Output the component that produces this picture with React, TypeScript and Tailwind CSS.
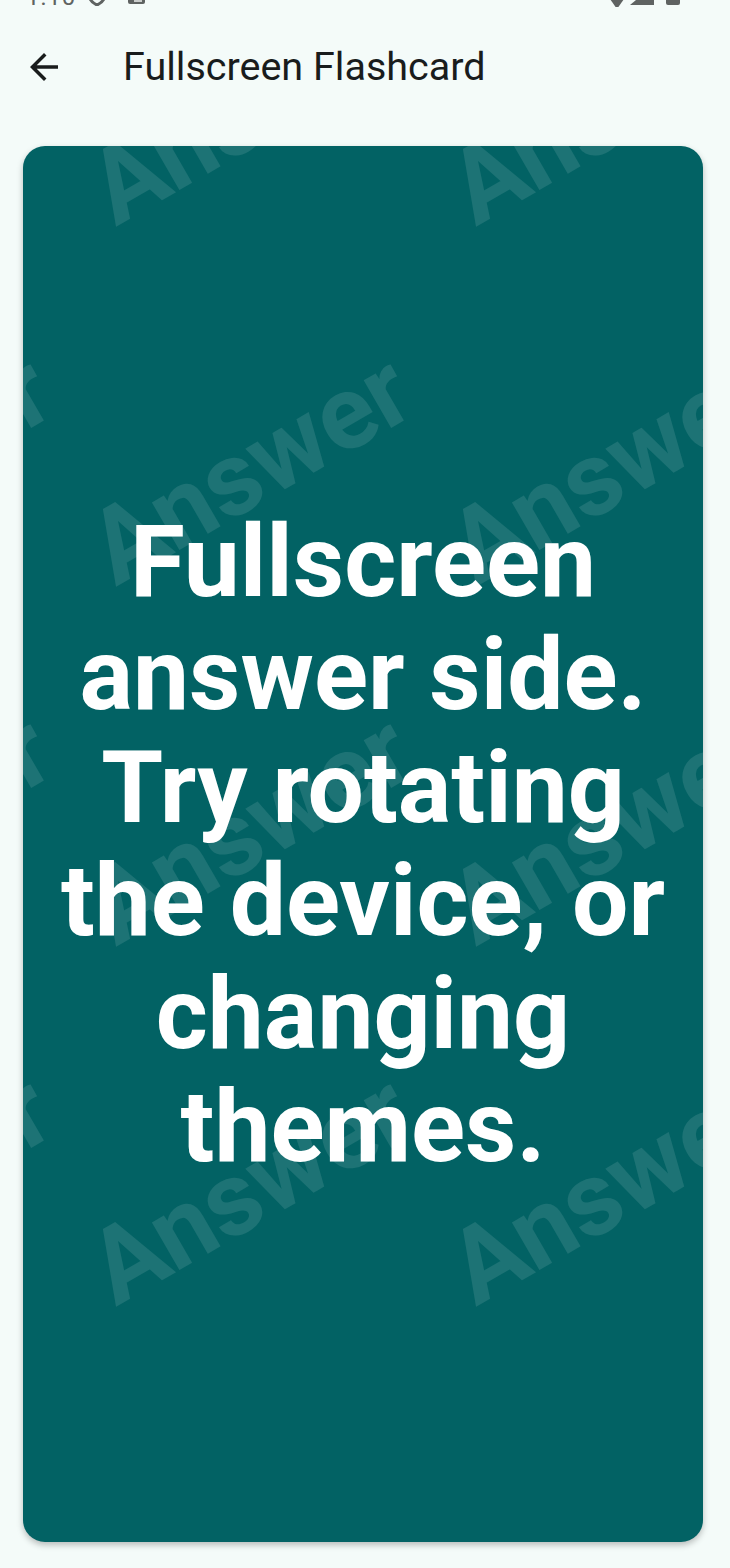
import React from 'react';

// watermark word centres, relative to the card's top-left corner
const WATERMARK_COLS = [-133, 227, 587];
const WATERMARK_ROWS = [-37, 323, 683, 1043];

const StatusBar: React.FC = () => (
  <div className="h-[7px] overflow-hidden">
    <div className="-mt-[20px] flex h-[25px] items-end justify-between pl-[26px] pr-[50px] text-[#5f6362]">
      <div className="flex items-end gap-[12px]">
        <span className="text-[24px] leading-[24px] tracking-[1px] mb-[-4px]">1:10</span>
        <svg width="18" height="22" viewBox="0 0 18 22" className="mb-[-1px]">
          <path d="M9 1 L17 4 V10 C17 15 13.5 19 9 21 C4.5 19 1 15 1 10 V4 Z" fill="none" stroke="currentColor" strokeWidth="3" />
        </svg>
        <svg width="17" height="16" viewBox="0 0 17 16" className="ml-[10px] mb-[1px]">
          <rect x="0" y="0" width="17" height="16" rx="2" fill="currentColor" />
          <rect x="6" y="12" width="8" height="2" fill="#c9cccb" />
        </svg>
      </div>
      <div className="flex items-end gap-[6px]">
        <svg width="14" height="10" viewBox="0 0 14 10" className="mb-[-4px]">
          <path d="M0 0 H14 L7 10 Z" fill="currentColor" />
        </svg>
        <svg width="24" height="20" viewBox="0 0 24 20">
          <path d="M24 0 V20 H0 Z" fill="currentColor" />
        </svg>
        <svg width="14" height="22" viewBox="0 0 14 22" className="ml-[6px]">
          <rect x="0" y="0" width="14" height="22" rx="2" fill="currentColor" />
        </svg>
      </div>
    </div>
  </div>
);

const AppBar: React.FC = () => (
  <div className="flex h-[120px] items-center">
    <button className="ml-[23px] flex h-[42px] w-[42px] items-center justify-center text-[#191c1c]" aria-label="Back">
      <svg width="42" height="42" viewBox="0 0 24 24" fill="currentColor">
        <path d="M20 11H7.83l5.59-5.59L12 4l-8 8 8 8 1.41-1.41L7.83 13H20v-2z" />
      </svg>
    </button>
    <h1 className="ml-[58px] text-[39.5px] font-normal text-[#191c1c] leading-none">Fullscreen Flashcard</h1>
  </div>
);

const Watermark: React.FC = () => (
  <div className="pointer-events-none absolute inset-0 overflow-hidden rounded-[22px]">
    {WATERMARK_ROWS.map((y) =>
      WATERMARK_COLS.map((x) => (
        <span
          key={`${x}-${y}`}
          className="absolute whitespace-nowrap text-[104px] font-bold leading-none text-white/[0.11]"
          style={{ left: x, top: y, transform: 'translate(-50%, -50%) rotate(-30deg)' }}
        >
          Answer
        </span>
      ))
    )}
  </div>
);

export default function App() {
  return (
    <div className="min-h-[1568px] bg-[#f4fbf9] font-['Roboto',sans-serif]">
      <StatusBar />
      <AppBar />
      <div className="relative ml-[23px] mt-[19px] flex h-[1396px] w-[680px] items-center justify-center rounded-[22px] bg-[#026264] px-[8px] shadow-[0_3px_6px_rgba(0,0,0,0.25)]">
        <Watermark />
        <p className="relative text-center text-[100px] font-bold leading-[113px] text-white">
          Fullscreen answer side. Try rotating the device, or changing themes.
        </p>
      </div>
    </div>
  );
}
